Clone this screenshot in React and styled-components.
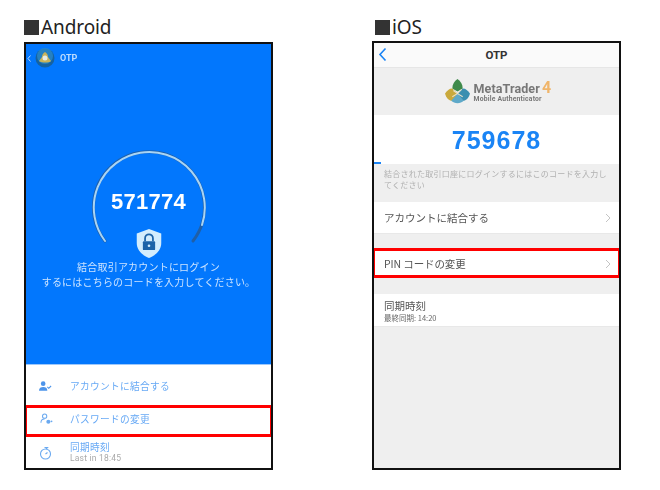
import React from "react";
import styled, { createGlobalStyle } from "styled-components";

const Global = createGlobalStyle`
  html, body { margin: 0; padding: 0; background: #fff; }
  body { font-family: "Noto Sans CJK JP", "Noto Sans", sans-serif; }
`;
const Page = styled.div`
  width: 660px; height: 490px; display: flex; padding: 14px 0 0 24px; box-sizing: border-box; overflow: hidden;
`;
const Column = styled.section`
  width: 249px; margin-right: ${p => p.$gap || 0}px; display: flex; flex-direction: column;
`;
const Title = styled.h2`
  margin: 0 0 0 ${p => p.$indent || 0}px; height: ${p => p.$h}px; font-size: 19px; font-weight: 400; line-height: 26px; color: #222;
  font-family: "Noto Sans", "Noto Sans CJK JP", sans-serif; white-space: nowrap;
  letter-spacing: -.1px;
`;
const Square = styled.span`
  display: inline-block; width: 15px; height: 15px; background: #333; vertical-align: -1px; margin-right: 2px;
`;
const Phone = styled.div`
  height: ${p => p.$h}px; border: 2px solid #111; box-sizing: border-box; background: ${p => p.$bg};
  display: flex; flex-direction: column; overflow: hidden;
`;
const BlueArea = styled.div`
  height: 321px; box-sizing: border-box; flex: none; background: #0277fd; color: #fff; display: flex; flex-direction: column; align-items: center;
  border-bottom: 1px solid #9dc8fb;
`;
const AndroidBar = styled.div`
  align-self: stretch; height: 28px; flex: none; display: flex; align-items: center; padding-left: 1px; gap: 4px;
  color: #bcdcff; font: 700 9px "Roboto", sans-serif;
`;
const BarTitle = styled.span`margin-left: 1px; filter: blur(.3px);`;
const Gauge = styled.div`
  margin-top: 78px; width: 118px; height: 109px; position: relative; flex: none;
`;
const GaugeSvg = styled.svg`position: absolute; left: 0; top: 0;`;
const Code = styled.div`
  position: absolute; left: 0; right: 0; top: 39px; text-align: center;
  font: 700 22px/26px "Liberation Sans", sans-serif; letter-spacing: .3px; color: #fff; filter: blur(.25px);
`;
const Shield = styled.svg`position: absolute; left: 45px; top: 78px;`;
const AndroidText = styled.p`
  margin: 0; font-size: 10px; line-height: 15px; letter-spacing: .2px; text-align: center; color: #cde4ff; filter: blur(.3px);
`;
const AndroidRow = styled.div`
  flex: none; height: ${p => p.$h}px; display: flex; align-items: center; padding: ${p => p.$top || 0}px 0 ${p => p.$bottom || 0}px 13px; gap: ${p => p.$gap}px;
  box-sizing: border-box; ${p => p.$hl ? "border: 3px solid #f00; margin: 0 -2px;" : ""}
  color: #67a9f5; font-size: 9.7px; letter-spacing: .3px;
`;
const RowLabel = styled.span`filter: blur(.3px);`;
const TwoLines = styled.div`display: flex; flex-direction: column; line-height: 11px; filter: blur(.25px);`;
const Small = styled.span`font: 400 8.5px/11px "Roboto", sans-serif; color: #aaa; letter-spacing: .2px;`;

const IosBar = styled.div`
  flex: none; height: 25px; box-sizing: border-box; background: #fafafa; border-bottom: 1px solid #e6e6e6; display: flex; align-items: center; justify-content: center; position: relative;
  font: 700 11.5px "Roboto", sans-serif; color: #333;
`;
const BackIcon = styled.svg`position: absolute; left: 4px; top: 4px;`;
const LogoBand = styled.div`
  flex: none; height: 47px; display: flex; align-items: center; justify-content: center; gap: 3px; filter: blur(.3px);
`;
const LogoText = styled.div`display: flex; flex-direction: column; width: 76px; margin-top: 1px;`;
const LogoMain = styled.div`
  font: 700 12.5px/13px "Roboto", sans-serif; color: #777; white-space: nowrap; letter-spacing: .1px;
`;
const LogoFour = styled.span`color: #f0b56a; font-size: 16px; margin-left: 2px;`;
const LogoSub = styled.div`font: 700 6.8px/8px "Roboto", sans-serif; color: #777; white-space: nowrap; letter-spacing: .2px;`;
const CodeCard = styled.div`
  flex: none; height: 49px; background: #fff; display: flex; flex-direction: column; position: relative;
`;
const IosCode = styled.div`
  font: 700 25px/50px "Liberation Sans", sans-serif; color: #1a84f5; text-align: center; letter-spacing: 1px; filter: blur(.25px);
`;
const Progress = styled.div`
  position: absolute; left: 0; bottom: 0; width: ${p => p.$w}px; height: 2px; background: #1a84f5;
`;
const Note = styled.p`
  flex: none; height: 38px; box-sizing: border-box; margin: 0; padding: 4px 9px 0 10px; font-size: 8px; line-height: 11px; color: #b0b0b0; letter-spacing: .25px; filter: blur(.3px);
`;
const IosRow = styled.div`
  flex: none; height: ${p => p.$h}px; box-sizing: border-box; background: #fff; display: flex; align-items: center; justify-content: space-between;
  padding: ${p => p.$top || 0}px 8px 0 10px; color: #555; font-size: 10.5px; letter-spacing: 0;
  border-bottom: 1px solid #e8e8e8;
  ${p => p.$hl ? "border: 3px solid #f00; margin: 0 -2px; padding-left: 9px; padding-right: 7px; letter-spacing: -.1px;" : ""}
`;
const IosStack = styled.div`display: flex; flex-direction: column; line-height: 14px; filter: blur(.3px);`;
const IosSmall = styled.span`font-size: 7.5px; line-height: 10px; color: #666;`;
const Spacer = styled.div`flex: none; height: ${p => p.$h}px;`;

const Chevron = () => (
  <svg width="6" height="10" viewBox="0 0 6 10"><path d="M1 1l4 4-4 4" fill="none" stroke="#c4c4c4" strokeWidth="1"/></svg>
);

const MtLogo = ({ size = 27 }) => (
  <svg width={size} height={size} viewBox="0 0 26 26">
    <path d="M13 1c3 2 5 5 5 9l-5 3-5-3c0-4 2-7 5-9z" fill="#3f8a4b"/>
    <path d="M1 15c2-3 4-5 7-5l5 5-3 7c-4 1-8-2-9-7z" fill="#c9a93c"/>
    <path d="M25 15c-2-3-4-5-7-5l-5 5 3 7c4 1 8-2 9-7z" fill="#3b8fb0"/>
    <path d="M7 22c3 3 9 3 12 0l-6-7z" fill="#5ea9c9"/>
    <path d="M9 12l4 3 4-4M8 18l5-3 5 3" stroke="#e8e0c8" strokeWidth="1" fill="none"/>
  </svg>
);

export default function App() {
  return (
    <Page>
      <Global />
      <Column $gap={99}>
        <Title $h={28}><Square />Android</Title>
        <Phone $h={428} $bg="#fff">
          <BlueArea>
            <AndroidBar>
              <svg width="4" height="7" viewBox="0 0 4 7"><path d="M3.5.5L1 3.5l2.5 3" fill="none" stroke="#bcdcff" strokeWidth="1"/></svg>
              <svg width="20" height="20" viewBox="0 0 20 20">
                <circle cx="10" cy="10" r="9.5" fill="#16629f"/>
                <circle cx="10" cy="8" r="8" fill="#2c8fd0" opacity=".7"/>
                <path d="M10 4c2 1 3 3 3 5l3 4c-2 2-9 2-12 0l3-4c0-2 1-4 3-5z" fill="#c9b35a"/>
                <circle cx="10" cy="10" r="2.5" fill="#e9ece4"/>
              </svg>
              <BarTitle>OTP</BarTitle>
            </AndroidBar>
            <Gauge>
              <GaugeSvg width="118" height="109" viewBox="0 0 118 109">
                <path d="M15 91A55.5 55.5 0 1 1 103 91" fill="none" stroke="#1f5fa8" strokeWidth="3" strokeLinecap="round"/>
                <path d="M15 91A55.5 55.5 0 1 1 112 75" fill="none" stroke="#a8d4f5" strokeWidth="2" strokeLinecap="round"/>
              </GaugeSvg>
              <Code>571774</Code>
              <Shield width="28" height="31" viewBox="0 0 32 35">
                <path d="M16 1l14 5v11c0 8-6 14-14 17C8 31 2 25 2 17V6z" fill="#d3edfd"/>
                <path d="M11.5 15v-3.5a4.5 4.5 0 0 1 9 0V15" fill="none" stroke="#1c63a8" strokeWidth="2"/>
                <rect x="9" y="15" width="14" height="10" rx="1" fill="#1c63a8"/>
                <circle cx="16" cy="20" r="1.5" fill="#d3edfd"/>
              </Shield>
            </Gauge>
            <AndroidText>結合取引アカウントにログイン<br />するにはこちらのコードを入力してください。</AndroidText>
          </BlueArea>
          <AndroidRow $h={40} $gap={18} $top={2}>
            <svg width="13" height="10" viewBox="0 0 14 10"><circle cx="4.5" cy="2.5" r="2.5" fill="#4d94ea"/><path d="M0 10c0-3 2-4 4.5-4S9 7 9 10z" fill="#4d94ea"/><path d="M9 6l1.5 1.5L13 5" stroke="#4d94ea" strokeWidth="1.2" fill="none"/></svg>
            <RowLabel>アカウントに結合する</RowLabel>
          </AndroidRow>
          <AndroidRow $h={32} $hl $gap={17} $bottom={4}>
            <svg width="13" height="12" viewBox="0 0 14 12"><circle cx="5" cy="3" r="2.3" fill="none" stroke="#6aa9f0" strokeWidth="1.1"/><path d="M1 10c0-3 2-4 4-4" fill="none" stroke="#6aa9f0" strokeWidth="1.1"/><circle cx="9" cy="9" r="2.2" fill="#6aa9f0"/><circle cx="12.4" cy="8.5" r="1" fill="#6aa9f0"/></svg>
            <RowLabel>パスワードの変更</RowLabel>
          </AndroidRow>
          <AndroidRow $h={31} $gap={18}>
            <svg width="13" height="14" viewBox="0 0 12 14"><circle cx="6" cy="8" r="5" fill="none" stroke="#6aa9f0" strokeWidth="1.1"/><path d="M6 8l2-1.5M5 1.5h3l-1.5 1.5" fill="none" stroke="#6aa9f0" strokeWidth="1.1"/></svg>
            <TwoLines>
              <span>同期時刻</span>
              <Small>Last in 18:45</Small>
            </TwoLines>
          </AndroidRow>
        </Phone>
      </Column>
      <Column>
        <Title $h={27} $indent={3}><Square />iOS</Title>
        <Phone $h={429} $bg="#efefef">
          <IosBar>
            <BackIcon width="9" height="15" viewBox="0 0 9 15"><path d="M7.5 1.5L2 7.5l5.5 6" fill="none" stroke="#1a84f5" strokeWidth="1.6"/></BackIcon>
            OTP
          </IosBar>
          <LogoBand>
            <MtLogo />
            <LogoText>
              <LogoMain>MetaTrader<LogoFour>4</LogoFour></LogoMain>
              <LogoSub>Mobile Authenticator</LogoSub>
            </LogoText>
          </LogoBand>
          <CodeCard>
            <IosCode>759678</IosCode>
            <Progress $w={7} />
          </CodeCard>
          <Note>結合された取引口座にログインするにはこのコードを入力してください</Note>
          <IosRow $h={32}>
            <IosStack>アカウントに結合する</IosStack>
            <Chevron />
          </IosRow>
          <Spacer $h={14} />
          <IosRow $h={30} $hl $top={1}>
            <IosStack>PIN コードの変更</IosStack>
            <Chevron />
          </IosRow>
          <Spacer $h={16} />
          <IosRow $h={33} $top={1}>
            <IosStack>
              <span>同期時刻</span>
              <IosSmall>最終同期: 14:20</IosSmall>
            </IosStack>
          </IosRow>
        </Phone>
      </Column>
    </Page>
  );
}
